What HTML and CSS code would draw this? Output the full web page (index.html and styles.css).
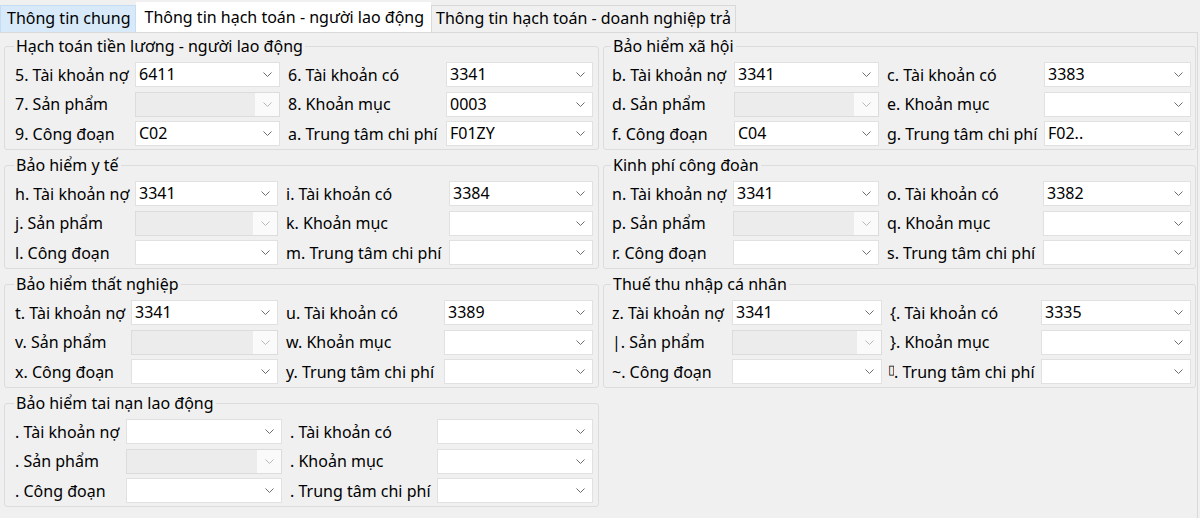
FILE: index.html
```html
<!DOCTYPE html>
<html lang="vi">
<head>
    <meta charset="UTF-8" />
    <title>Thông tin hạch toán</title>
    <link rel="stylesheet" href="styles.css">
</head>
<body>
    <div class="tabs">
        <div class="tab hover">Thông tin chung</div>
        <div class="tab active">Thông tin hạch toán - người lao động</div>
        <div class="tab">Thông tin hạch toán - doanh nghiệp trả</div>
    </div>

    <div class="page">
        <div class="column">
            <fieldset class="group g-luong">
                <legend>Hạch toán tiền lương - người lao động</legend>
                <div class="rows">
                    <span class="label">5. Tài khoản nợ</span>
                    <div class="combo"><span class="value">6411</span><span class="btn"><svg width="9" height="5" viewBox="0 0 9 5"><polyline points="0.5,0.5 4.5,4.5 8.5,0.5"/></svg></span></div>
                    <span class="label second">6. Tài khoản có</span>
                    <div class="combo"><span class="value">3341</span><span class="btn"><svg width="9" height="5" viewBox="0 0 9 5"><polyline points="0.5,0.5 4.5,4.5 8.5,0.5"/></svg></span></div>

                    <span class="label">7. Sản phẩm</span>
                    <div class="combo disabled"><span class="value"></span><span class="btn"><svg width="9" height="5" viewBox="0 0 9 5"><polyline points="0.5,0.5 4.5,4.5 8.5,0.5"/></svg></span></div>
                    <span class="label second">8. Khoản mục</span>
                    <div class="combo"><span class="value">0003</span><span class="btn"><svg width="9" height="5" viewBox="0 0 9 5"><polyline points="0.5,0.5 4.5,4.5 8.5,0.5"/></svg></span></div>

                    <span class="label">9. Công đoạn</span>
                    <div class="combo"><span class="value">C02</span><span class="btn"><svg width="9" height="5" viewBox="0 0 9 5"><polyline points="0.5,0.5 4.5,4.5 8.5,0.5"/></svg></span></div>
                    <span class="label second">a. Trung tâm chi phí</span>
                    <div class="combo"><span class="value">F01ZY</span><span class="btn"><svg width="9" height="5" viewBox="0 0 9 5"><polyline points="0.5,0.5 4.5,4.5 8.5,0.5"/></svg></span></div>
                </div>
            </fieldset>

            <fieldset class="group g-yte">
                <legend>Bảo hiểm y tế</legend>
                <div class="rows">
                    <span class="label">h. Tài khoản nợ</span>
                    <div class="combo"><span class="value">3341</span><span class="btn"><svg width="9" height="5" viewBox="0 0 9 5"><polyline points="0.5,0.5 4.5,4.5 8.5,0.5"/></svg></span></div>
                    <span class="label second">i. Tài khoản có</span>
                    <div class="combo"><span class="value">3384</span><span class="btn"><svg width="9" height="5" viewBox="0 0 9 5"><polyline points="0.5,0.5 4.5,4.5 8.5,0.5"/></svg></span></div>

                    <span class="label">j. Sản phẩm</span>
                    <div class="combo disabled"><span class="value"></span><span class="btn"><svg width="9" height="5" viewBox="0 0 9 5"><polyline points="0.5,0.5 4.5,4.5 8.5,0.5"/></svg></span></div>
                    <span class="label second">k. Khoản mục</span>
                    <div class="combo"><span class="value"></span><span class="btn"><svg width="9" height="5" viewBox="0 0 9 5"><polyline points="0.5,0.5 4.5,4.5 8.5,0.5"/></svg></span></div>

                    <span class="label">l. Công đoạn</span>
                    <div class="combo"><span class="value"></span><span class="btn"><svg width="9" height="5" viewBox="0 0 9 5"><polyline points="0.5,0.5 4.5,4.5 8.5,0.5"/></svg></span></div>
                    <span class="label second">m. Trung tâm chi phí</span>
                    <div class="combo"><span class="value"></span><span class="btn"><svg width="9" height="5" viewBox="0 0 9 5"><polyline points="0.5,0.5 4.5,4.5 8.5,0.5"/></svg></span></div>
                </div>
            </fieldset>

            <fieldset class="group g-thatnghiep">
                <legend>Bảo hiểm thất nghiệp</legend>
                <div class="rows">
                    <span class="label">t. Tài khoản nợ</span>
                    <div class="combo"><span class="value">3341</span><span class="btn"><svg width="9" height="5" viewBox="0 0 9 5"><polyline points="0.5,0.5 4.5,4.5 8.5,0.5"/></svg></span></div>
                    <span class="label second">u. Tài khoản có</span>
                    <div class="combo"><span class="value">3389</span><span class="btn"><svg width="9" height="5" viewBox="0 0 9 5"><polyline points="0.5,0.5 4.5,4.5 8.5,0.5"/></svg></span></div>

                    <span class="label">v. Sản phẩm</span>
                    <div class="combo disabled"><span class="value"></span><span class="btn"><svg width="9" height="5" viewBox="0 0 9 5"><polyline points="0.5,0.5 4.5,4.5 8.5,0.5"/></svg></span></div>
                    <span class="label second">w. Khoản mục</span>
                    <div class="combo"><span class="value"></span><span class="btn"><svg width="9" height="5" viewBox="0 0 9 5"><polyline points="0.5,0.5 4.5,4.5 8.5,0.5"/></svg></span></div>

                    <span class="label">x. Công đoạn</span>
                    <div class="combo"><span class="value"></span><span class="btn"><svg width="9" height="5" viewBox="0 0 9 5"><polyline points="0.5,0.5 4.5,4.5 8.5,0.5"/></svg></span></div>
                    <span class="label second">y. Trung tâm chi phí</span>
                    <div class="combo"><span class="value"></span><span class="btn"><svg width="9" height="5" viewBox="0 0 9 5"><polyline points="0.5,0.5 4.5,4.5 8.5,0.5"/></svg></span></div>
                </div>
            </fieldset>

            <fieldset class="group g-tainan">
                <legend>Bảo hiểm tai nạn lao động</legend>
                <div class="rows">
                    <span class="label">. Tài khoản nợ</span>
                    <div class="combo"><span class="value"></span><span class="btn"><svg width="9" height="5" viewBox="0 0 9 5"><polyline points="0.5,0.5 4.5,4.5 8.5,0.5"/></svg></span></div>
                    <span class="label second">. Tài khoản có</span>
                    <div class="combo"><span class="value"></span><span class="btn"><svg width="9" height="5" viewBox="0 0 9 5"><polyline points="0.5,0.5 4.5,4.5 8.5,0.5"/></svg></span></div>

                    <span class="label">. Sản phẩm</span>
                    <div class="combo disabled"><span class="value"></span><span class="btn"><svg width="9" height="5" viewBox="0 0 9 5"><polyline points="0.5,0.5 4.5,4.5 8.5,0.5"/></svg></span></div>
                    <span class="label second">. Khoản mục</span>
                    <div class="combo"><span class="value"></span><span class="btn"><svg width="9" height="5" viewBox="0 0 9 5"><polyline points="0.5,0.5 4.5,4.5 8.5,0.5"/></svg></span></div>

                    <span class="label">. Công đoạn</span>
                    <div class="combo"><span class="value"></span><span class="btn"><svg width="9" height="5" viewBox="0 0 9 5"><polyline points="0.5,0.5 4.5,4.5 8.5,0.5"/></svg></span></div>
                    <span class="label second">. Trung tâm chi phí</span>
                    <div class="combo"><span class="value"></span><span class="btn"><svg width="9" height="5" viewBox="0 0 9 5"><polyline points="0.5,0.5 4.5,4.5 8.5,0.5"/></svg></span></div>
                </div>
            </fieldset>
        </div>

        <div class="column">
            <fieldset class="group right g-xahoi">
                <legend>Bảo hiểm xã hội</legend>
                <div class="rows">
                    <span class="label">b. Tài khoản nợ</span>
                    <div class="combo"><span class="value">3341</span><span class="btn"><svg width="9" height="5" viewBox="0 0 9 5"><polyline points="0.5,0.5 4.5,4.5 8.5,0.5"/></svg></span></div>
                    <span class="label second">c. Tài khoản có</span>
                    <div class="combo"><span class="value">3383</span><span class="btn"><svg width="9" height="5" viewBox="0 0 9 5"><polyline points="0.5,0.5 4.5,4.5 8.5,0.5"/></svg></span></div>

                    <span class="label">d. Sản phẩm</span>
                    <div class="combo disabled"><span class="value"></span><span class="btn"><svg width="9" height="5" viewBox="0 0 9 5"><polyline points="0.5,0.5 4.5,4.5 8.5,0.5"/></svg></span></div>
                    <span class="label second">e. Khoản mục</span>
                    <div class="combo"><span class="value"></span><span class="btn"><svg width="9" height="5" viewBox="0 0 9 5"><polyline points="0.5,0.5 4.5,4.5 8.5,0.5"/></svg></span></div>

                    <span class="label">f. Công đoạn</span>
                    <div class="combo"><span class="value">C04</span><span class="btn"><svg width="9" height="5" viewBox="0 0 9 5"><polyline points="0.5,0.5 4.5,4.5 8.5,0.5"/></svg></span></div>
                    <span class="label second">g. Trung tâm chi phí</span>
                    <div class="combo"><span class="value">F02..</span><span class="btn"><svg width="9" height="5" viewBox="0 0 9 5"><polyline points="0.5,0.5 4.5,4.5 8.5,0.5"/></svg></span></div>
                </div>
            </fieldset>

            <fieldset class="group right g-congdoan">
                <legend>Kinh phí công đoàn</legend>
                <div class="rows">
                    <span class="label">n. Tài khoản nợ</span>
                    <div class="combo"><span class="value">3341</span><span class="btn"><svg width="9" height="5" viewBox="0 0 9 5"><polyline points="0.5,0.5 4.5,4.5 8.5,0.5"/></svg></span></div>
                    <span class="label second">o. Tài khoản có</span>
                    <div class="combo"><span class="value">3382</span><span class="btn"><svg width="9" height="5" viewBox="0 0 9 5"><polyline points="0.5,0.5 4.5,4.5 8.5,0.5"/></svg></span></div>

                    <span class="label">p. Sản phẩm</span>
                    <div class="combo disabled"><span class="value"></span><span class="btn"><svg width="9" height="5" viewBox="0 0 9 5"><polyline points="0.5,0.5 4.5,4.5 8.5,0.5"/></svg></span></div>
                    <span class="label second">q. Khoản mục</span>
                    <div class="combo"><span class="value"></span><span class="btn"><svg width="9" height="5" viewBox="0 0 9 5"><polyline points="0.5,0.5 4.5,4.5 8.5,0.5"/></svg></span></div>

                    <span class="label">r. Công đoạn</span>
                    <div class="combo"><span class="value"></span><span class="btn"><svg width="9" height="5" viewBox="0 0 9 5"><polyline points="0.5,0.5 4.5,4.5 8.5,0.5"/></svg></span></div>
                    <span class="label second">s. Trung tâm chi phí</span>
                    <div class="combo"><span class="value"></span><span class="btn"><svg width="9" height="5" viewBox="0 0 9 5"><polyline points="0.5,0.5 4.5,4.5 8.5,0.5"/></svg></span></div>
                </div>
            </fieldset>

            <fieldset class="group right g-thue">
                <legend>Thuế thu nhập cá nhân</legend>
                <div class="rows">
                    <span class="label">z. Tài khoản nợ</span>
                    <div class="combo"><span class="value">3341</span><span class="btn"><svg width="9" height="5" viewBox="0 0 9 5"><polyline points="0.5,0.5 4.5,4.5 8.5,0.5"/></svg></span></div>
                    <span class="label second">{. Tài khoản có</span>
                    <div class="combo"><span class="value">3335</span><span class="btn"><svg width="9" height="5" viewBox="0 0 9 5"><polyline points="0.5,0.5 4.5,4.5 8.5,0.5"/></svg></span></div>

                    <span class="label">|. Sản phẩm</span>
                    <div class="combo disabled"><span class="value"></span><span class="btn"><svg width="9" height="5" viewBox="0 0 9 5"><polyline points="0.5,0.5 4.5,4.5 8.5,0.5"/></svg></span></div>
                    <span class="label second">}. Khoản mục</span>
                    <div class="combo"><span class="value"></span><span class="btn"><svg width="9" height="5" viewBox="0 0 9 5"><polyline points="0.5,0.5 4.5,4.5 8.5,0.5"/></svg></span></div>

                    <span class="label">~. Công đoạn</span>
                    <div class="combo"><span class="value"></span><span class="btn"><svg width="9" height="5" viewBox="0 0 9 5"><polyline points="0.5,0.5 4.5,4.5 8.5,0.5"/></svg></span></div>
                    <span class="label second tight"><span class="tofu">&#9647;</span>. Trung tâm chi phí</span>
                    <div class="combo"><span class="value"></span><span class="btn"><svg width="9" height="5" viewBox="0 0 9 5"><polyline points="0.5,0.5 4.5,4.5 8.5,0.5"/></svg></span></div>
                </div>
            </fieldset>
        </div>
    </div>
</body>
</html>
```

FILE: styles.css
```css
* {
    box-sizing: border-box;
}

html, body {
    margin: 0;
    padding: 0;
    background: #f0f0f0;
    color: #000;
    font-family: "Noto Sans", "Open Sans", sans-serif;
    font-size: 16px;
}

.tabs {
    display: flex;
    align-items: flex-end;
    height: 32px;
}

.tab {
    height: 27px;
    padding: 0 4px;
    line-height: 25px;
    white-space: nowrap;
    border: 1px solid #d9d9d9;
    border-bottom: none;
    background: #f0f0f0;
}

.tab.hover {
    padding: 0 4px 0 6px;
    background: #d8eaf9;
    border-color: #c5ddf2;
}

.tab.active {
    height: 30px;
    line-height: 28px;
    padding: 0 6px 0 8px;
    background: #fff;
    border-color: #fff;
}

.page {
    display: grid;
    grid-template-columns: 595px 593px;
    gap: 4px;
    width: 1198px;
    height: 486px;
    padding: 3px 1px 0 4px;
    border-top: 1px solid #dadada;
    border-right: 1px solid #dadada;
}

.column {
    display: flex;
    flex-direction: column;
    gap: 5px;
}

.group {
    margin: 0;
    padding: 6px 4px 3px 10px;
    border: 1px solid #dcdcdc;
    border-radius: 3px;
}

.group.right {
    padding: 6px 3px 3px 8px;
}

.group legend {
    margin-left: -1px;
    padding: 0 2px;
    line-height: 20px;
}

.rows {
    display: grid;
    grid-auto-rows: 25px;
    row-gap: 4.5px;
    align-items: center;
}

.g-luong .rows { grid-template-columns: 120px 145px 166px 147px; }
.g-yte .rows { grid-template-columns: 120px 143px 171px 144px; }
.g-thatnghiep .rows { grid-template-columns: 116px 147px 166px 149px; }
.g-tainan .rows { grid-template-columns: 111px 156px 155px 156px; }
.g-xahoi .rows { grid-template-columns: 122px 145px 165px 147px; }
.g-congdoan .rows { grid-template-columns: 121px 146px 164px 148px; }
.g-thue .rows { grid-template-columns: 120px 150px 159px 150px; }

.label {
    white-space: nowrap;
}

.label.second {
    padding-left: 8px;
}

.label.tight {
    padding-left: 6px;
}

.tofu {
    display: inline-block;
    width: 6px;
    overflow: hidden;
    font-size: 13px;
    vertical-align: baseline;
}

.combo {
    display: flex;
    height: 25px;
    background: #fff;
    border: 1px solid #e1e1e1;
}

.combo .value {
    flex: 1;
    padding-left: 3px;
    line-height: 23px;
    white-space: nowrap;
    overflow: hidden;
}

.combo .btn {
    display: flex;
    align-items: center;
    justify-content: center;
    width: 24px;
}

.combo svg polyline {
    fill: none;
    stroke: #6d6d6d;
    stroke-width: 1;
}

.combo.disabled {
    border-color: #dcdcdc;
}

.combo.disabled .value {
    background: #ececec;
}

.combo.disabled .btn {
    background: #fafafa;
}

.combo.disabled svg polyline {
    stroke: #b8b8b8;
}
```
